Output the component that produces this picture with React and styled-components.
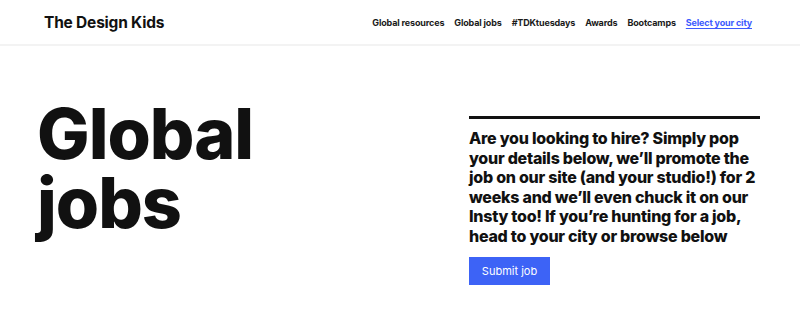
import React from "react";
import styled, { createGlobalStyle } from "styled-components";

const GlobalStyle = createGlobalStyle`
  body {
    margin: 0;
    background: #fff;
    font-family: "Inter", "Liberation Sans", sans-serif;
    color: #111;
  }
`;

const Header = styled.header`
  height: 44px;
  display: flex;
  align-items: center;
  justify-content: space-between;
  padding: 0 48px 0 44px;
  border-bottom: 2px solid #f3f3f3;
`;

const Logo = styled.a`
  font-size: 15.5px;
  font-weight: 700;
  color: #111;
  text-decoration: none;
  letter-spacing: -0.2px;
`;

const Nav = styled.nav`
  display: flex;
  gap: 10px;
`;

const NavLink = styled.a`
  font-size: 9px;
  font-weight: 700;
  letter-spacing: -0.15px;
  color: ${({ $active }) => ($active ? "#3d5afe" : "#1a1a1a")};
  text-decoration: ${({ $active }) => ($active ? "underline" : "none")};
  text-underline-offset: 2px;
`;

const Main = styled.main`
  display: grid;
  grid-template-columns: 1fr 291px;
  align-items: start;
  padding: 70px 40px 0 37px;
`;

const Title = styled.h1`
  margin: -17px 0 0;
  font-size: 70px;
  font-weight: 800;
  line-height: 69px;
  letter-spacing: -1px;
`;

const Intro = styled.section`
  border-top: 3px solid #111;
  padding-top: 10px;
`;

const Lead = styled.p`
  margin: 0;
  font-size: 16px;
  font-weight: 800;
  line-height: 19.5px;
  letter-spacing: -0.25px;
`;

const Button = styled.button`
  margin-top: 11px;
  width: 81px;
  height: 28px;
  border: none;
  background: #3d63f6;
  color: #fff;
  font-family: inherit;
  font-size: 11px;
`;

const links = ["Global resources", "Global jobs", "#TDKtuesdays", "Awards", "Bootcamps"];

export default function App() {
  return (
    <>
      <GlobalStyle />
      <Header>
        <Logo href="#">The Design Kids</Logo>
        <Nav>
          {links.map((l) => (
            <NavLink key={l} href="#">{l}</NavLink>
          ))}
          <NavLink $active href="#">Select your city</NavLink>
        </Nav>
      </Header>
      <Main>
        <Title>Global<br />jobs</Title>
        <Intro>
          <Lead>
            Are you looking to hire? Simply pop your details below, we’ll promote the job on our site (and your studio!) for 2 weeks and we’ll even chuck it on our Insty too! If you’re hunting for a job, head to your city or browse below
          </Lead>
          <Button>Submit job</Button>
        </Intro>
      </Main>
    </>
  );
}
